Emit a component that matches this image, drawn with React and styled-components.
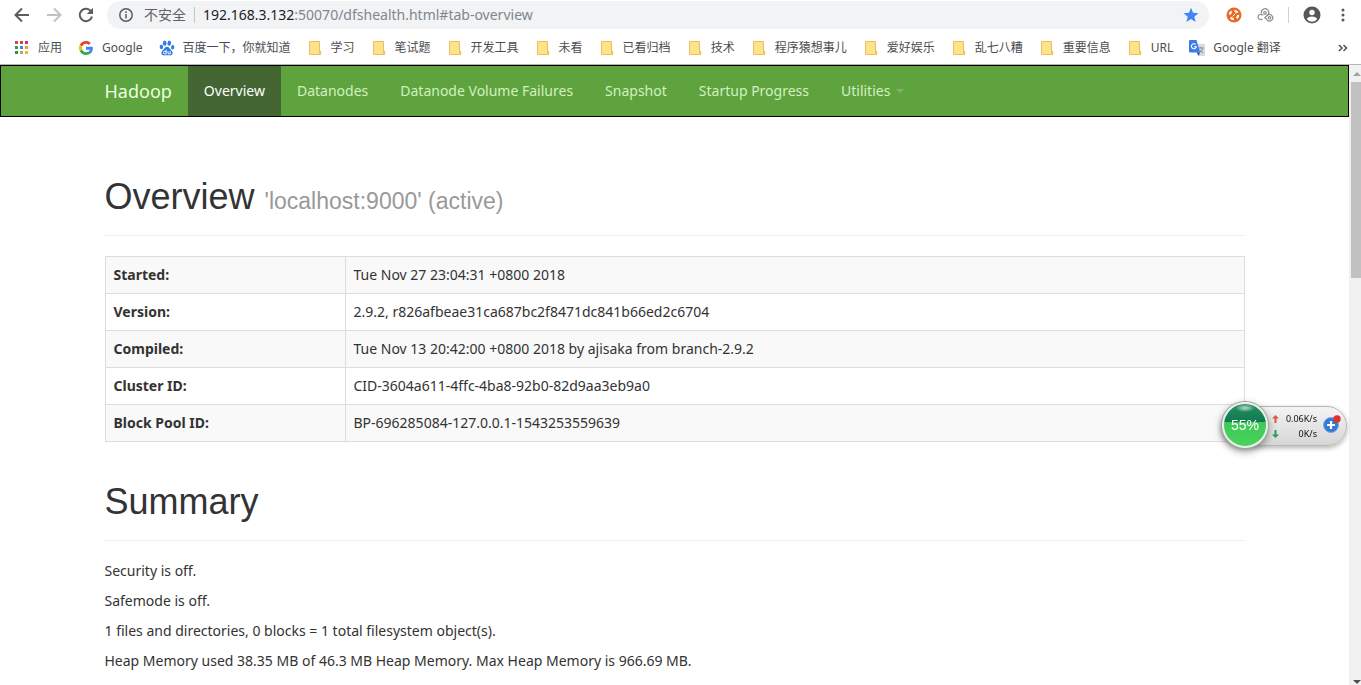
import React from "react";

import styled, { createGlobalStyle } from "styled-components";

const bookmarks = [
  { icon: "apps", label: "应用" },
  { icon: "google", label: "Google" },
  { icon: "baidu", label: "百度一下，你就知道" },
  { icon: "folder", label: "学习" },
  { icon: "folder", label: "笔试题" },
  { icon: "folder", label: "开发工具" },
  { icon: "folder", label: "未看" },
  { icon: "folder", label: "已看归档" },
  { icon: "folder", label: "技术" },
  { icon: "folder", label: "程序猿想事儿" },
  { icon: "folder", label: "爱好娱乐" },
  { icon: "folder", label: "乱七八糟" },
  { icon: "folder", label: "重要信息" },
  { icon: "folder", label: "URL" },
  { icon: "translate", label: "Google 翻译" },
];

const tabs = [
  "Overview",
  "Datanodes",
  "Datanode Volume Failures",
  "Snapshot",
  "Startup Progress",
];

const info = [
  ["Started:", "Tue Nov 27 23:04:31 +0800 2018"],
  ["Version:", "2.9.2, r826afbeae31ca687bc2f8471dc841b66ed2c6704"],
  ["Compiled:", "Tue Nov 13 20:42:00 +0800 2018 by ajisaka from branch-2.9.2"],
  ["Cluster ID:", "CID-3604a611-4ffc-4ba8-92b0-82d9aa3eb9a0"],
  ["Block Pool ID:", "BP-696285084-127.0.0.1-1543253559639"],
];

const summary = [
  "Security is off.",
  "Safemode is off.",
  "1 files and directories, 0 blocks = 1 total filesystem object(s).",
  "Heap Memory used 38.35 MB of 46.3 MB Heap Memory. Max Heap Memory is 966.69 MB.",
];

const appColors = [
  "#d8433a", "#e0453a", "#d6336c",
  "#2f9e4f", "#2f8fe8", "#e9a13a",
  "#2f8e4f", "#c9a83a", "#eab53a",
];

const BookmarkIcon = ({ name }) => {
  if (name === "apps") {
    return (
      <svg width="16" height="16" viewBox="0 0 16 16">
        {appColors.map((c, i) => (
          <rect
            key={i}
            x={1 + (i % 3) * 5}
            y={1 + Math.floor(i / 3) * 5}
            width="3"
            height="3"
            fill={c}
          />
        ))}
      </svg>
    );
  }
  if (name === "google") {
    return (
      <svg width="16" height="16" viewBox="0 0 48 48">
        <path fill="#EA4335" d="M24 11.5c3.2 0 6 1.1 8.200 3.200l6.200-6.200C34.600 5 29.700 3 24 3 15.800 3 8.700 7.700 5.200 14.500l7.100 5.500C14 15.100 18.600 11.500 24 11.500z" />
        <path fill="#4285F4" d="M44.500 24.500c0-1.400-.1-2.700-.4-4H24v8.500h11.500c-.5 2.600-2 4.900-4.200 6.400l6.900 5.300c4-3.800 6.300-9.300 6.300-16.200z" />
        <path fill="#FBBC05" d="M12.300 28c-.5-1.300-.7-2.600-.7-4s.3-2.700.7-4l-7.100-5.500C3.800 17.400 3 20.600 3 24s.8 6.600 2.200 9.500z" />
        <path fill="#34A853" d="M24 45c5.700 0 10.500-1.900 14-5.100l-6.900-5.300c-1.900 1.300-4.300 2-7.100 2-5.400 0-10-3.700-11.700-8.600l-7.100 5.500C8.700 40.300 15.800 45 24 45z" />
      </svg>
    );
  }
  if (name === "baidu") {
    return (
      <svg width="16" height="16" viewBox="0 0 16 16" fill="#2f7be0">
        <ellipse cx="5.700" cy="3.200" rx="1.800" ry="2.600" />
        <ellipse cx="10.300" cy="3.200" rx="1.800" ry="2.600" transform="rotate(10 10.300 3.200)" />
        <ellipse cx="2.400" cy="6.900" rx="1.700" ry="2.300" transform="rotate(-12 2.400 6.900)" />
        <ellipse cx="13.700" cy="7.300" rx="1.600" ry="2.300" transform="rotate(8 13.700 7.300)" />
        <path d="M8 6.800c-2 0-2.600 2-4 3.100-1.500 1.300-2 2.600-1.500 3.900.6 1.600 2.100 1.700 3.500 1.500 1.400-.2 2.600-.2 4 0 1.500.2 3 .1 3.500-1.500.5-1.500-.2-2.700-1.600-3.900C10.600 8.800 10 6.800 8 6.800z" />
        <path d="M7.200 9.700v4.100H5.600a1.200 1.200 0 0 1 0-2.500h1.600M9 11.200v2c0 .5.300.7.700.7h1.500v-2.700" fill="none" stroke="#fff" strokeWidth="1" />
      </svg>
    );
  }
  if (name === "translate") {
    return (
      <svg width="16" height="16" viewBox="0 0 16 16">
        <path d="M7 4h8a1 1 0 0 1 1 1v10a1 1 0 0 1-1 1H10z" fill="#d5d8dc" />
        <path d="M9.500 8h5M12 7v1M13.800 8c-.4 2.200-2 4-3.800 5M10.600 9.500c.7 1.500 2 2.700 3.400 3.300" fill="none" stroke="#7a8fa8" strokeWidth="1" />
        <path d="M1 0h6.500l3.500 12.500H1a1 1 0 0 1-1-1V1a1 1 0 0 1 1-1z" fill="#3f7be8" />
        <path d="M7.500 12.500H11L9.700 16z" fill="#2a57b8" />
        <path d="M6.800 4.500a2.500 2.500 0 1 0 .6 2.200H5" fill="none" stroke="#fff" strokeWidth="1.100" />
      </svg>
    );
  }
  return (
    <svg width="16" height="16" viewBox="0 0 16 16">
      <path d="M2.500 1.500h10v9.500h1.200v3.500H2.500z" fill="#fde28a" stroke="#e9c15c" />
      <path d="M12.500 11v3.500" stroke="#e9c15c" />
    </svg>
  );
};

const Toolbar = () => (
  <ToolbarDiv>
    <IconButton aria-label="Back">
      <svg width="16" height="16" viewBox="0 0 16 16" fill="none" stroke="#5a5d61" strokeWidth="2">
        <path d="M15 8H2M8 1.500 1.500 8 8 14.500" />
      </svg>
    </IconButton>
    <IconButton aria-label="Forward">
      <svg width="16" height="16" viewBox="0 0 16 16" fill="none" stroke="#c0c2c4" strokeWidth="2">
        <path d="M1 8h13M8 1.500 14.500 8 8 14.500" />
      </svg>
    </IconButton>
    <IconButton aria-label="Reload">
      <svg width="16" height="16" viewBox="0 0 16 16">
        <path d="M13.200 4.600A6.200 6.200 0 1 0 14 9.500" fill="none" stroke="#5a5d61" strokeWidth="2" />
        <path d="M15 .8v6.200H8.800z" fill="#5a5d61" />
      </svg>
    </IconButton>
    <AddressDiv>
      <svg width="16" height="16" viewBox="0 0 16 16">
        <circle cx="8" cy="8" r="6.200" fill="none" stroke="#5a5d61" strokeWidth="1.500" />
        <path d="M8 7v4.500M8 4.300v1.600" stroke="#5a5d61" strokeWidth="1.500" />
      </svg>
      <InsecureSpan>不安全</InsecureSpan>
      <UrlDiv>
        <b>192.168.3.132</b>:50070/dfshealth.html#tab-overview
      </UrlDiv>
      <svg width="16" height="16" viewBox="0 0 16 16" fill="#4285f4">
        <path d="M8 .8l2 5 5.400.4-4.100 3.500 1.300 5.200L8 12.100l-4.600 2.800 1.300-5.200L.6 6.200 6 5.800z" />
      </svg>
    </AddressDiv>
    <ToolsDiv>
      <IconButton aria-label="Blocker">
        <svg width="16" height="16" viewBox="0 0 16 16">
          <circle cx="8" cy="8" r="7.500" fill="#ea6a24" />
          <circle cx="8" cy="8" r="4.200" fill="none" stroke="#fff" strokeWidth="2.200" strokeDasharray="3.600 3" />
          <path d="M6.500 9.500l3-3" stroke="#fff" strokeWidth="1" />
        </svg>
      </IconButton>
      <IconButton aria-label="Cloud">
        <svg width="18" height="16" viewBox="0 0 18 16" fill="none" stroke="#8a8d90" strokeWidth="1.200">
          <path d="M7 8.500A2.700 2.700 0 1 0 6.500 12" />
          <path d="M5.500 6.500a3.700 3.700 0 1 1 6 1.800L8.500 11" />
          <circle cx="9" cy="6" r="1.300" />
          <path d="M11.500 8.300a3.200 3.200 0 1 1-.5 4.500L9 10.500" />
          <circle cx="13.500" cy="10.800" r="1.200" />
        </svg>
      </IconButton>
      <DividerDiv />
      <IconButton aria-label="Profile">
        <svg width="18" height="18" viewBox="0 0 18 18">
          <circle cx="9" cy="9" r="8.500" fill="#54575b" />
          <circle cx="9" cy="6.500" r="2.700" fill="#fff" />
          <path d="M3.700 13c1-1.900 3.500-2.600 5.300-2.600s4.300.7 5.300 2.600a6.500 6.500 0 0 1-10.600 0z" fill="#fff" />
        </svg>
      </IconButton>
      <IconButton aria-label="Menu">
        <svg width="16" height="16" viewBox="0 0 16 16" fill="#54575b">
          <circle cx="8" cy="3" r="1.500" />
          <circle cx="8" cy="8" r="1.500" />
          <circle cx="8" cy="13" r="1.500" />
        </svg>
      </IconButton>
    </ToolsDiv>
  </ToolbarDiv>
);

const Bookmarks = () => (
  <BookmarksNav>
    {bookmarks.map((b) => (
      <BookmarkLink key={b.label} href="#">
        <BookmarkIcon name={b.icon} />
        {b.label}
      </BookmarkLink>
    ))}
    <MoreButton aria-label="More bookmarks">
      <svg width="10" height="8" viewBox="0 0 10 8" fill="none" stroke="#54575b" strokeWidth="1.600">
        <path d="M1 1l3 3-3 3M5.500 1l3 3-3 3" />
      </svg>
    </MoreButton>
  </BookmarksNav>
);

const Navbar = () => (
  <NavbarNav>
    <ContainerDiv $row>
      <BrandLink href="#">Hadoop</BrandLink>
      {tabs.map((t) => (
        <TabLink key={t} href="#" $active={t === "Overview"}>
          {t}
        </TabLink>
      ))}
      <TabLink href="#">
        Utilities
        <CaretSpan />
      </TabLink>
    </ContainerDiv>
  </NavbarNav>
);

const SpeedWidget = () => (
  <WidgetDiv>
    <BallDiv>55%</BallDiv>
    <SpeedsDiv>
      <SpeedDiv>
        <svg width="7" height="8" viewBox="0 0 7 8" fill="#e0553f">
          <path d="M3.500 0L7 3.500H4.500V8h-2V3.500H0z" />
        </svg>
        0.06K/s
      </SpeedDiv>
      <SpeedDiv>
        <svg width="7" height="8" viewBox="0 0 7 8" fill="#2a9a60">
          <path d="M3.500 8L0 4.500h2.500V0h2v4.500H7z" />
        </svg>
        0K/s
      </SpeedDiv>
    </SpeedsDiv>
    <PlusButton aria-label="Speed up">
      <svg width="18" height="18" viewBox="0 0 18 18">
        <circle cx="8" cy="10" r="7.500" fill="#3279d8" stroke="#7fa9e0" />
        <path d="M8 6v8M4 10h8" stroke="#fff" strokeWidth="2.200" />
        <circle cx="14" cy="4" r="3.700" fill="#e0312b" />
      </svg>
    </PlusButton>
  </WidgetDiv>
);

const Scrollbar = () => (
  <ScrollbarDiv>
    <ArrowSvg viewBox="0 0 10 17" fill="#a3a3a3">
      <path d="M2 11l4-4 4 4z" />
    </ArrowSvg>
    <ThumbDiv />
    <ArrowSvg viewBox="0 0 10 17" fill="#505050">
      <path d="M2 12l4 4 4-4z" />
    </ArrowSvg>
  </ScrollbarDiv>
);

const App = () => {
  return (
    <>
      <GlobalStyle />
      <WindowDiv>
        <Toolbar />
        <Bookmarks />
        <ViewportDiv>
          <PageDiv>
            <Navbar />
            <ContainerDiv as="main">
              <HeaderDiv $first>
                <Title>
                  Overview <small>'localhost:9000' (active)</small>
                </Title>
              </HeaderDiv>
              <InfoTable>
                <tbody>
                  {info.map(([name, value]) => (
                    <tr key={name}>
                      <th scope="row">{name}</th>
                      <td>{value}</td>
                    </tr>
                  ))}
                </tbody>
              </InfoTable>
              <HeaderDiv>
                <Title>Summary</Title>
              </HeaderDiv>
              {summary.map((s) => (
                <SummaryP key={s}>{s}</SummaryP>
              ))}
            </ContainerDiv>
          </PageDiv>
          <Scrollbar />
        </ViewportDiv>
        <SpeedWidget />
      </WindowDiv>
    </>
  );
};

export default App;

const GlobalStyle = createGlobalStyle`
  * {
    box-sizing: border-box;
  }
  body {
    margin: 0;
    background: #fff;
    color: #333;
    font-family: "Noto Sans", "Noto Sans CJK SC", sans-serif;
    font-size: 14px;
    line-height: 20px;
  }
  a {
    text-decoration: none;
  }
  svg {
    display: block;
    flex-shrink: 0;
  }
`;

const WindowDiv = styled.div`
  display: flex;
  flex-direction: column;
  height: 100vh;
  overflow: hidden;
`;

const ToolbarDiv = styled.div`
  display: flex;
  align-items: center;
  gap: 16px;
  height: 30px;
  padding: 0 10px 0 14px;
  flex-shrink: 0;
`;

const IconButton = styled.button`
  display: flex;
  padding: 0;
  border: 0;
  background: none;
`;

const AddressDiv = styled.div`
  display: flex;
  align-items: center;
  flex: 1;
  height: 28px;
  margin-right: 1px;
  margin-left: -3px;
  padding: 0 10px 0 11px;
  border-radius: 14px;
  background: #f1f3f4;
`;

const InsecureSpan = styled.span`
  margin: 0 8px 0 10px;
  color: #5f6368;
`;

const UrlDiv = styled.div`
  flex: 1;
  padding-left: 8px;
  border-left: 1px solid #c4c6c9;
  color: #80868b;
  line-height: 16px;
  b {
    color: #202124;
    font-weight: 400;
  }
`;

const ToolsDiv = styled.div`
  display: flex;
  align-items: center;
  gap: 14px;
`;

const DividerDiv = styled.div`
  width: 1px;
  height: 16px;
  background: #cfd1d3;
`;

const BookmarksNav = styled.nav`
  display: flex;
  align-items: center;
  gap: 16px;
  height: 35px;
  padding: 2px 13px 0 14px;
  border-bottom: 1px solid #b5b5b5;
  flex-shrink: 0;
`;

const BookmarkLink = styled.a`
  display: flex;
  align-items: center;
  gap: 8px;
  color: #4a4d51;
  font-size: 12px;
  white-space: nowrap;
`;

const MoreButton = styled(IconButton)`
  margin-left: auto;
`;

const ViewportDiv = styled.div`
  display: flex;
  flex: 1;
  min-height: 0;
`;

const PageDiv = styled.div`
  flex: 1;
  overflow: hidden;
`;

const ContainerDiv = styled.div`
  display: ${(props) => (props.$row ? "flex" : "block")};
  max-width: 1170px;
  margin: 0 auto;
  padding: 0 15px;
`;

const NavbarNav = styled.nav`
  border: 1px solid #000;
  background: #5fa33e;
`;

const TabLink = styled.a`
  display: flex;
  align-items: center;
  height: 50px;
  padding: 0 16px;
  background: ${(props) => (props.$active ? "#446633" : "transparent")};
  color: ${(props) => (props.$active ? "#fff" : "#d2f0c0")};
`;

const BrandLink = styled(TabLink)`
  padding-left: 0;
  color: #eaffdf;
  font-size: 18px;
`;

const CaretSpan = styled.span`
  margin-left: 6px;
  border: 4px solid transparent;
  border-top-color: #8fa878;
  border-bottom: 0;
`;

const HeaderDiv = styled.div`
  margin: ${(props) => (props.$first ? "60px" : "40px")} 0 20px;
  padding-bottom: 18px;
  border-bottom: 1px solid #eee;
`;

const Title = styled.h1`
  margin: 0;
  font-family: "Liberation Sans", Arial, sans-serif;
  font-size: 36px;
  font-weight: 400;
  line-height: 40px;
  small {
    color: #999;
    font-size: 23px;
    line-height: 1;
  }
`;

const InfoTable = styled.table`
  width: 100%;
  border-collapse: collapse;
  th,
  td {
    padding: 8px;
    border: 1px solid #ddd;
    text-align: left;
  }
  th {
    width: 240px;
  }
  tr:nth-child(odd) {
    background: #f9f9f9;
  }
`;

const SummaryP = styled.p`
  margin: 0 0 10px;
`;

const ScrollbarDiv = styled.div`
  display: flex;
  flex-direction: column;
  width: 12px;
  padding-left: 2px;
  background: #f1f1f1;
`;

const ArrowSvg = styled.svg`
  width: 10px;
  height: 17px;
`;

const ThumbDiv = styled.div`
  height: 196px;
  margin-bottom: auto;
  background: #c1c1c1;
`;

const WidgetDiv = styled.div`
  position: fixed;
  top: 406px;
  right: 14px;
  display: flex;
  align-items: center;
  height: 40px;
  padding-right: 5px;
  border: 1px solid #b8b8b8;
  border-radius: 20px;
  background: linear-gradient(#f4f4f4, #d6d6d6);
  box-shadow: 0 2px 5px rgba(0, 0, 0, 0.3);
`;

const BallDiv = styled.div`
  width: 46px;
  height: 46px;
  margin-top: -2px;
  border: 2px solid #e8f0ea;
  border-radius: 50%;
  background: radial-gradient(ellipse 10px 4px at 50% 4px, #b8dcc8, transparent),
    linear-gradient(#2a8c62 0, #0f7a50 43%, #40c858 44%, #48d45a 100%);
  box-shadow: 0 0 0 1px #9aa89e, 0 3px 8px rgba(0, 0, 0, 0.45);
  color: #fff;
  font-family: "Liberation Sans", Arial, sans-serif;
  line-height: 42px;
  text-align: center;
`;

const SpeedsDiv = styled.div`
  width: 45px;
  margin: 0 6px 0 4px;
`;

const SpeedDiv = styled.div`
  display: flex;
  align-items: center;
  justify-content: space-between;
  color: #111;
  font-size: 9px;
  line-height: 15px;
`;

const PlusButton = styled(IconButton)`
  margin-top: -4px;
`;
